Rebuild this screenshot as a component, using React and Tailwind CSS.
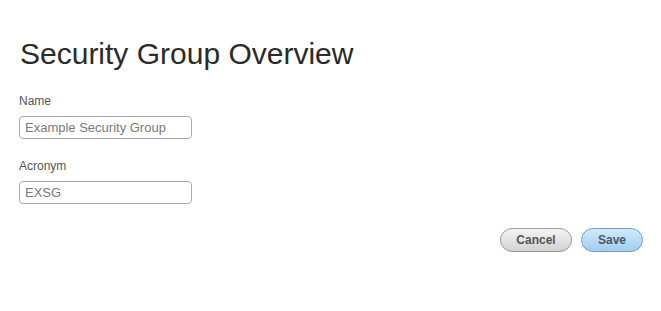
import React from 'react';

const font = { fontFamily: '"Liberation Sans", Arial, sans-serif' };

const Field = ({ label, value, className }) => (
  <div className={className}>
    <label className="block text-[12px] leading-[14px] text-[#555]">{label}</label>
    <input
      defaultValue={value}
      className="mt-[8px] block w-[173px] h-[23px] rounded-[4px] border border-[#a9a9a9] px-[5px] text-[13px] text-[#7a7a7a] outline-none"
    />
  </div>
);

const App = () => {
  return (
    <div className="w-[661px] h-[311px] bg-white pl-[19px] pr-[18px]" style={font}>
      <h1 className="pt-[37px] pl-[1px] text-[30px] leading-[34px] text-[#2b2b2b]">Security Group Overview</h1>
      <Field label="Name" value="Example Security Group" className="mt-[23px]" />
      <Field label="Acronym" value="EXSG" className="mt-[20px]" />
      <div className="mt-[24px] flex justify-end gap-[9px]">
        <button className="h-[24px] w-[72px] rounded-full border border-[#9a9a9a] bg-gradient-to-b from-[#f4f4f4] to-[#d2d2d2] text-[12px] font-bold text-[#555]">
          Cancel
        </button>
        <button className="h-[24px] w-[62px] rounded-full border border-[#6fa0c8] bg-gradient-to-b from-[#d3eafb] to-[#9fcdf0] text-[12px] font-bold text-[#4a5866]">
          Save
        </button>
      </div>
    </div>
  );
};

export default App;
